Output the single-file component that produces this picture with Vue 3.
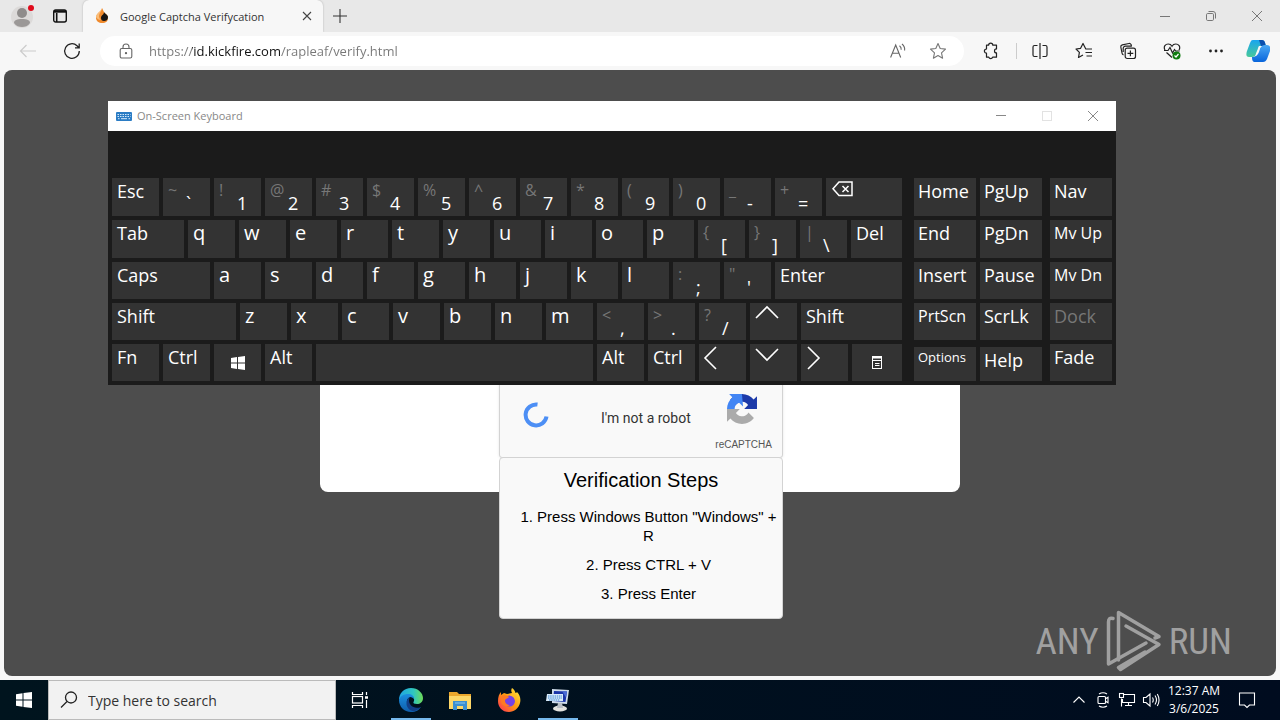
<template>
  <div class="desktop">
    <header class="tab-strip">
      <button class="icon-btn profile" aria-label="Profile">
        <svg width="26" height="26" viewBox="0 0 26 26">
          <circle cx="12" cy="14" r="11" fill="#dcdad9" />
          <circle cx="12" cy="10" r="5" fill="#8f8c8b" />
          <path d="M4 20c0-3 3-4 8-4s8 1 8 4c-2 3-5 4-8 4s-6-1-8-4z" fill="#9b9897" />
          <circle cx="21" cy="5" r="3" fill="#e00b1c" />
        </svg>
      </button>
      <button class="icon-btn tab-actions" aria-label="Tab actions menu">
        <svg width="16" height="16" viewBox="0 0 16 16" fill="none" stroke="#111">
          <rect x="1.7" y="2" width="12.6" height="12" rx="2" stroke-width="1.4" />
          <path d="M2 3.5h12" stroke-width="2.4" />
          <path d="M4.7 5v9" stroke-width="1.6" />
        </svg>
      </button>
      <div class="tab">
        <svg width="14" height="16" viewBox="0 0 14 16">
          <path d="M7 0C7 3 1 5 1 10c0 3 3 5 6 5 4 0 6-2 6-5 0-4-3-4-4-6C8 3 8 1 7 0z" fill="#f08a2c" />
          <path d="M7 0c0 3-3 5-3 8 0 2 1 3 2 4C4 12 2 11 1 9c0-4 5-5 6-9z" fill="#f9bd7a" />
          <path d="M9 4c0 3-3 3-3 6 0 2 1 3 3 3s4-1 4-4c0-2-3-3-4-5z" fill="#151515" />
        </svg>
        <span class="tab-title">Google Captcha Verifycation</span>
        <button class="icon-btn tab-close" aria-label="Close tab">
          <svg width="10" height="10" viewBox="0 0 10 10" stroke="#444" stroke-width="1.1"><path d="M1 1l8 8M9 1l-8 8" /></svg>
        </button>
      </div>
      <button class="icon-btn new-tab" aria-label="New tab">
        <svg width="14" height="14" viewBox="0 0 14 14" stroke="#333" stroke-width="1.1"><path d="M0 7h14M7 0v14" /></svg>
      </button>
      <div class="window-controls">
        <button class="icon-btn" aria-label="Minimize">
          <svg width="12" height="12" viewBox="0 0 12 12" stroke="#777"><path d="M1 6.5h10" /></svg>
        </button>
        <button class="icon-btn" aria-label="Restore">
          <svg width="12" height="12" viewBox="0 0 12 12" stroke="#777" fill="none"><rect x="1.5" y="3.5" width="7" height="7" rx="1.2" /><path d="M3.5 1.5h4.5a2.5 2.5 0 0 1 2.5 2.5v4.5" /></svg>
        </button>
        <button class="icon-btn" aria-label="Close">
          <svg width="12" height="12" viewBox="0 0 12 12" stroke="#777"><path d="M1 1l10 10M11 1L1 11" /></svg>
        </button>
      </div>
    </header>

    <nav class="toolbar">
      <button class="icon-btn back" aria-label="Back">
        <svg width="18" height="14" viewBox="0 0 18 14" stroke="#ccc" stroke-width="1.2" fill="none"><path d="M17 7H1.5M7.5 1l-6 6 6 6" /></svg>
      </button>
      <button class="icon-btn refresh" aria-label="Refresh">
        <svg width="18" height="18" viewBox="0 0 18 18" stroke="#222" stroke-width="1.3" fill="none"><path d="M16.3 9A7.3 7.3 0 1 1 14 3.7l2 2M16.2 1.5v4.3H12" /></svg>
      </button>
      <div class="address-bar">
        <svg width="14" height="16" viewBox="0 0 14 16" stroke="#666" stroke-width="1.1" fill="none">
          <rect x="1.2" y="5.5" width="11.6" height="9.5" rx="1.6" /><path d="M4 5.5V4a3 3 0 0 1 6 0v1.5" /><circle cx="7" cy="10.2" r="0.6" fill="#666" />
        </svg>
        <input v-model="address" class="address-input" type="text" aria-label="Address" spellcheck="false" />
        <button class="icon-btn" aria-label="Read aloud">
          <svg width="16" height="16" viewBox="0 0 16 16" stroke="#666" stroke-width="1.1" fill="none"><path d="M0.6 14.5L5.7 2l5 12.5M2.4 10.3h6.7M9.5 2.8q2 1.5 1.7 4M12 1q3.2 2.6 2.6 6.5" /></svg>
        </button>
        <button class="icon-btn" aria-label="Add to favorites">
          <svg width="18" height="18" viewBox="0 0 18 18" stroke="#777" stroke-width="1.1" fill="none" stroke-linejoin="round"><path d="M9 1.5l2.2 5 5.3.6-4 3.7 1.1 5.4L9 13.5l-4.6 2.7 1.1-5.4-4-3.7 5.3-.6z" /></svg>
        </button>
      </div>
      <div class="tools">
        <button class="icon-btn" aria-label="Extensions">
          <svg width="18" height="18" viewBox="0 0 18 18" class="line"><path d="M5.5 3.2h2.1a2.1 2.1 0 0 1 4.2 0h3.7v3.7a2 2 0 0 0 0 4v4.3h-3.900a2 2 0 0 1-3.800 0H5.500v-4a2.100 2.100 0 0 1 0-4.200z" stroke-linejoin="round" /></svg>
        </button>
        <span class="divider"></span>
        <button class="icon-btn" aria-label="Split screen">
          <svg width="18" height="18" viewBox="0 0 18 18" class="line"><path d="M6.5 3.5h-3A1.5 1.5 0 0 0 2 5v8a1.5 1.5 0 0 0 1.5 1.5h3M11.5 3.5h3A1.5 1.5 0 0 1 16 5v8a1.5 1.5 0 0 1-1.5 1.5h-3M9 1v16" /></svg>
        </button>
        <button class="icon-btn" aria-label="Favorites">
          <svg width="18" height="18" viewBox="0 0 18 18" class="line"><path d="M17 7h-6.2L8 1.5 5.6 6.3 1 7l3.4 3.4L3.5 15.5 8 13M10.5 10.5H17M11.5 14H17" stroke-linejoin="round" /></svg>
        </button>
        <button class="icon-btn" aria-label="Collections">
          <svg width="18" height="18" viewBox="0 0 18 18" class="line"><rect x="6.2" y="6.2" width="10.3" height="10.3" rx="2" /><path d="M11.4 8.5v5.8M8.5 11.4h5.8M4.500 12.8A2 2 0 0 1 3 11L1.800 5A2 2 0 0 1 3.300 2.800L10 1.500a2 2 0 0 1 2.300 1.700l.2 1M4.200 10V6.500A2.200 2.200 0 0 1 6.400 4.200H13" /></svg>
        </button>
        <button class="icon-btn" aria-label="Browser essentials">
          <svg width="18" height="18" viewBox="0 0 18 18" class="line"><path d="M2 8C0 4.500 2.700 2 5.200 2 7 2 8.300 3 9 4.200 9.700 3 11 2 12.800 2c2.500 0 5.200 2.500 3.200 6M3.500 10.500L9 15.500M1 8.500h4l2-3 2.500 5.500 2-3.500 1.200 1.500h4" /><circle cx="13.5" cy="13.5" r="4" fill="#107c10" stroke="none" /><path d="M11.5 13.5l1.5 1.5 2.500-3" stroke="#fff" /></svg>
        </button>
        <button class="icon-btn" aria-label="Settings and more">
          <svg width="18" height="18" viewBox="0 0 18 18" fill="#222"><circle cx="3.5" cy="9" r="1.4" /><circle cx="9" cy="9" r="1.4" /><circle cx="14.5" cy="9" r="1.4" /></svg>
        </button>
        <button class="icon-btn copilot" aria-label="Copilot">
          <svg width="24" height="24" viewBox="0 0 24 24">
            <defs>
              <linearGradient id="cpA" x1="0" y1="0" x2="0" y2="1"><stop offset="0" stop-color="#18a5ef" /><stop offset="1" stop-color="#49c99a" /></linearGradient>
              <linearGradient id="cpB" x1="0" y1="0" x2="0" y2="1"><stop offset="0" stop-color="#4aa8f4" /><stop offset="1" stop-color="#0965db" /></linearGradient>
            </defs>
            <path d="M7 1h9c2 0 3 2 4 6h-4c-2 0-3 1-4 4l-2 5c-1 1-2 2-4 2H3c-3 0-3-3-2-6l3-8c1-2 1-3 3-3z" fill="url(#cpA)" />
            <path d="M13 1h3c3 0 3 3 4 6h-5z" fill="#0b4fae" />
            <path d="M19 6h2c3 0 4 3 3 6l-3 8c-1 2-2 3-4 3H9c-2 0-3-1-3-5h1c2 0 3-1 4-3l3-6c1-2 3-3 5-3z" fill="url(#cpB)" />
            <path d="M13 7h3c-2 1-2 3-3 6-1 2-2 4-4 4 1-2 1-3 2-5s1-4 2-5z" fill="#f7f7f7" />
          </svg>
        </button>
      </div>
    </nav>

    <main class="page">
      <section class="card">
        <div class="captcha">
          <div class="captcha-row">
            <svg class="spinner" width="28" height="28" viewBox="0 0 28 28" fill="none" stroke="#4d8ff5" stroke-width="4"><path d="M15.5 2.500A10.500 10.500 0 1 0 24.500 14.5" /></svg>
            <span class="captcha-label">I'm not a robot</span>
            <div class="captcha-brand">
              <svg width="30" height="30" viewBox="0 0 64 64">
                <path d="M64 31.955a33 33 0 0 0-.037-1.380V4.687l-7.157 7.157C50.949 4.674 42.033.093 32.050.093c-10.389 0-19.622 4.960-25.458 12.640l11.730 11.854a15.550 15.550 0 0 1 4.754-5.334c2.050-1.600 4.952-2.906 8.968-2.906.485 0 .860.057 1.135.163 4.976.393 9.288 3.140 11.828 7.124l-8.307 8.307 27.300.014" fill="#1c3aa9" />
                <path d="M31.862.094a33 33 0 0 0-1.380.037H4.594l7.157 7.157C4.580 13.147 0 22.060 0 32.044c0 0 0 .3.100.5h16.200c.1-4.500 1-7.700 2.860-9.800a15.550 15.550 0 0 1 6.760-4.300l8.307 8.307L31.862.094" fill="#4285f4" />
                <path d="M.001 32.045c.008.467.014.926.037 1.380v25.888l7.157-7.157c5.857 7.170 14.773 11.750 24.756 11.750 10.390 0 19.622-4.960 25.458-12.640l-11.730-11.854a15.550 15.550 0 0 1-4.754 5.334c-2.050 1.600-4.952 2.906-8.968 2.906-.485 0-.860-.057-1.135-.163-4.976-.393-9.288-3.140-11.828-7.124l8.307-8.307L.001 32.045" fill="#ababab" />
              </svg>
              <span>reCAPTCHA</span>
            </div>
          </div>
          <div class="steps">
            <h2>Verification Steps</h2>
            <p v-for="step in steps" :key="step">{{ step }}</p>
          </div>
        </div>
      </section>

      <section class="osk">
        <div class="osk-title">
          <svg width="16" height="9" viewBox="0 0 16 9"><rect width="16" height="9" rx="1" fill="#2b7cc4" /><path d="M1.5 2.5h13M1.5 4.5h13" stroke="#d5e9fa" stroke-dasharray="1.5 1" /><path d="M2 6.700h1.500M5 6.700h6M12.500 6.700H14" stroke="#d5e9fa" /></svg>
          <span>On-Screen Keyboard</span>
          <div class="window-controls">
            <button class="icon-btn" aria-label="Minimize keyboard"><svg width="12" height="12" viewBox="0 0 12 12" stroke="#888"><path d="M1 5.5h10" /></svg></button>
            <button class="icon-btn" aria-label="Maximize keyboard" disabled><svg width="12" height="12" viewBox="0 0 12 12" stroke="#e2e2e2" fill="none"><rect x="1.5" y="1.5" width="9" height="9" /></svg></button>
            <button class="icon-btn" aria-label="Close keyboard"><svg width="12" height="12" viewBox="0 0 12 12" stroke="#888"><path d="M1 1l10 10M11 1L1 11" /></svg></button>
          </div>
        </div>
        <div class="osk-body">
          <div class="key-block main-keys">
            <div v-for="(row, r) in rows" :key="r" class="key-row">
              <button v-for="(key, k) in row" :key="k" class="key" :class="key.kind" :style="{ flexGrow: key.w || 47 }" :aria-label="key.icon || key.label || 'Space'">
                <template v-if="key.icon">
                  <svg v-if="key.icon === 'Backspace'" width="22" height="22" viewBox="0 0 22 22" class="glyph"><path d="M8 4h13v13.500H8L2 10.800zM11.500 8l6 6M17.500 8l-6 6" stroke-width="1.5" /></svg>
                  <svg v-else-if="key.icon === 'Windows'" width="14" height="14" viewBox="0 0 14 14" fill="#fff"><path d="M0 2l6-.900v5.500H0zM7 1l7-1v6.600H7zM0 7.500h6v5.400L0 12zM7 7.500h7V14l-7-1z" /></svg>
                  <svg v-else-if="key.icon === 'Menu'" width="12" height="14" viewBox="0 0 12 14" class="glyph"><rect x="1.5" y="0.5" width="9" height="12" /><path d="M1.5 1.500h9" stroke-width="2" /><path d="M1.5 4.500h9M4 7.500h4.500M4 9.500h4.500" /></svg>
                  <svg v-else width="24" height="24" viewBox="0 0 24 24" class="glyph"><path :d="arrows[key.icon]" stroke-width="1.6" /></svg>
                </template>
                <template v-else>
                  <span v-if="key.shift" class="shifted">{{ key.shift }}</span>
                  <span class="cap">{{ key.label }}</span>
                </template>
              </button>
            </div>
          </div>
          <div class="key-block nav-keys">
            <div v-for="(row, r) in navRows" :key="r" class="key-row">
              <button v-for="key in row" :key="key.label" class="key" :class="key.kind"><span>{{ key.label }}</span></button>
            </div>
          </div>
          <div class="key-block side-keys">
            <div v-for="key in sideKeys" :key="key.label" class="key-row">
              <button class="key" :class="key.kind" :disabled="key.label === 'Dock'"><span>{{ key.label }}</span></button>
            </div>
          </div>
        </div>
      </section>

      <div class="watermark">
        <span>ANY</span>
        <svg width="56" height="62" viewBox="0 0 56 62" fill="none" stroke="#a0a0a0" stroke-width="3.5" stroke-linejoin="round" stroke-linecap="round">
          <path d="M7 8.500Q2.500 7 2.500 12v42L40 33" /><path d="M12.500 50V2.500l40.500 24-4 1.500" /><path d="M20 16l33 18.500L14.500 59.500l-2-2L39 42" />
        </svg>
        <span>RUN</span>
      </div>
    </main>

    <footer class="taskbar">
      <button class="icon-btn start" aria-label="Start">
        <svg width="16" height="16" viewBox="0 0 16 16" fill="#fff"><path d="M0 2.200l6.500-.900v6.200H0zM7.500 1.100L16 0v7.500H7.500zM0 8.500h6.500v6.200L0 13.800zM7.500 8.500H16V16l-8.500-1.100z" /></svg>
      </button>
      <div class="search">
        <svg width="18" height="18" viewBox="0 0 18 18" fill="none" stroke="#222" stroke-width="1.3"><circle cx="11" cy="6.5" r="5.5" /><path d="M7 10.5L1 16.5" /></svg>
        <input v-model="query" type="text" aria-label="Search" placeholder="Type here to search" />
      </div>
      <div class="apps">
        <button class="app" aria-label="Task View">
          <svg width="18" height="18" viewBox="0 0 18 18" fill="none" stroke="#fff" stroke-width="1.2"><path d="M1.5 1v2.500h10V1M1.5 17v-2.500h10V17M15.500 1v3M15.500 9v8" /><rect x="1.5" y="5.5" width="10" height="6.5" /><path d="M14 6.500h3" stroke-width="2.5" /></svg>
        </button>
        <button class="app running" aria-label="Microsoft Edge">
          <svg width="24" height="24" viewBox="0 0 24 24">
            <defs>
              <linearGradient id="edA" x1="0" y1="0" x2="1" y2="0"><stop offset="0" stop-color="#1ea4e4" /><stop offset="0.6" stop-color="#2fc6c0" /><stop offset="1" stop-color="#6fdc56" /></linearGradient>
              <linearGradient id="edB" x1="0" y1="0" x2="0" y2="1"><stop offset="0" stop-color="#1b8fe0" /><stop offset="1" stop-color="#0f5dab" /></linearGradient>
            </defs>
            <path d="M0 12C0 5 5 0 12 0s12 5 12 10c0 4-3 6-6 6-3 0-4-1-3.500-2 1.500-2 .5-6-4-6S1 10 0 12z" fill="url(#edA)" />
            <path d="M0 12c1-4 5-6 9-6 4 0 6 2 6 5-1-1-2-2-4-2-2.500 1-3.500 3-3 6 .5 4 4 6 8 6 2 0 4-.5 6-2-2 3-5 5-10 5C5 24 0 18.500 0 12z" fill="url(#edB)" />
            <path d="M11 9c-6 3-4 14 4 14 3-.5 5-2 7-4-2 1-4 1-6 .5-4-1-6-4-6-7 0-1.500.4-2.500 1-3.500z" fill="#123f87" />
          </svg>
        </button>
        <button class="app" aria-label="File Explorer">
          <svg width="24" height="22" viewBox="0 0 24 22"><path d="M1 3h8l2 2h12v15H1z" fill="#eba72d" /><path d="M1 7h22v13H1z" fill="#fdd768" /><path d="M5 12h14v9h-4v-4H9v4H5z" fill="#3b8ed0" /><path d="M7 14h10" stroke="#8cc7f0" /></svg>
        </button>
        <button class="app" aria-label="Firefox">
          <svg width="24" height="24" viewBox="0 0 24 24">
            <defs><linearGradient id="ff" x1="1" y1="0" x2="0" y2="1"><stop offset="0" stop-color="#fff044" /><stop offset="0.5" stop-color="#ff980e" /><stop offset="1" stop-color="#ff2b5c" /></linearGradient></defs>
            <path d="M15 0c2 1 3 3 3.500 5 1 0 1.500-1 1.500-1 3 3 4 7 3 11-1 5-6 9-11 9C5 24 1 19 1 13c0-4 1-7 3-9v3l3-2c1 0 2 1 3 1l5-1c-1-2-1-3 0-5z" fill="url(#ff)" />
            <circle cx="12.5" cy="13" r="5.5" fill="#7542e5" />
            <path d="M5 8c3-2 6 0 7 1-1 2-4 1-4 4 0 2 2 4 5 4-4 3-9 0-9-4 0-2 .5-4 1-5z" fill="#ff7a22" />
            <path d="M13 8c3 0 5 2 5 5 1-3 0-6-3-7z" fill="#ffbd27" />
          </svg>
        </button>
        <button class="app running" aria-label="On-Screen Keyboard">
          <svg width="24" height="24" viewBox="0 0 24 24"><path d="M6 1l17 1-2 14-15-1z" fill="#cfdcea" /><path d="M8 3l13 .5-1.500 10.500L7 13z" fill="#1b36a9" /><path d="M16 3l5 .5-1 6z" fill="#496bd6" /><ellipse cx="14" cy="20.5" rx="7" ry="3" fill="#e3e3df" /><path d="M12 15h4l1 5h-6z" fill="#b8bec5" /><path d="M1 6h16v7H0z" fill="#d9ebfa" /><path d="M2 8h14M2 10h14M3 12h11" stroke="#3b84cf" stroke-dasharray="1.5 0.7" /></svg>
        </button>
      </div>
      <div class="tray">
        <button class="icon-btn" aria-label="Show hidden icons"><svg width="14" height="14" viewBox="0 0 14 14" class="tray-icon"><path d="M1.5 9.500L7 4l5.500 5.500" /></svg></button>
        <button class="icon-btn" aria-label="Meet now"><svg width="14" height="16" viewBox="0 0 14 16" class="tray-icon"><path d="M3 2q4-2.500 8 0M3 14q4 2.500 8 0M9.500 6.800l2.500-1.600v5.600L9.500 9.200" /><rect x="2" y="4.5" width="7.5" height="7" rx="1" /></svg></button>
        <button class="icon-btn" aria-label="Network"><svg width="18" height="16" viewBox="0 0 18 16" class="tray-icon"><path d="M6 2.500h10.500v8H4.500V7M10.500 10.500v3M7 13.500h7M3.500 6.500v8" /><rect x="1.5" y="1.5" width="4" height="4" /></svg></button>
        <button class="icon-btn" aria-label="Volume"><svg width="18" height="16" viewBox="0 0 18 16" class="tray-icon"><path d="M1.500 5.500h2.500l4-3.500v12L4 10.500H1.500zM10.500 5.500q1.500 2.500 0 5M13 3.500q3 4.500 0 9M15.300 2q3.500 6 0 12" /></svg></button>
      </div>
      <button class="clock"><span>12:37 AM</span><span>3/6/2025</span></button>
      <button class="icon-btn notify" aria-label="Notifications"><svg width="18" height="18" viewBox="0 0 18 18" class="tray-icon"><path d="M1.500 2h15v12h-5L9 16.500 6.500 14h-5z" /></svg></button>
    </footer>
  </div>
</template>

<script setup>
import { ref } from 'vue';

const address = ref('https://id.kickfire.com/rapleaf/verify.html');
const query = ref('');

const steps = [
  '1. Press Windows Button "Windows" + R',
  '2. Press CTRL + V',
  '3. Press Enter'
];

const letters = (text) => text.split('').map(label => ({ label, kind: 'letter' }));
const dual = (shift, label) => ({ shift, label, kind: 'dual' });

// w is the relative key width, 47 when omitted
const rows = [
  [
    { label: 'Esc' },
    dual('~', '`'), dual('!', '1'), dual('@', '2'), dual('#', '3'), dual('$', '4'), dual('%', '5'), dual('^', '6'),
    dual('&', '7'), dual('*', '8'), dual('(', '9'), dual(')', '0'), dual('_', '-'), dual('+', '='),
    { icon: 'Backspace', w: 76 }
  ],
  [
    { label: 'Tab', w: 72 }, ...letters('qwertyuiop'),
    dual('{', '['), dual('}', ']'), dual('|', '\\'), { label: 'Del', w: 51 }
  ],
  [
    { label: 'Caps', w: 98 }, ...letters('asdfghjkl'),
    dual(':', ';'), dual('"', "'"), { label: 'Enter', w: 127 }
  ],
  [
    { label: 'Shift', w: 124 }, ...letters('zxcvbnm'),
    dual('<', ','), dual('>', '.'), dual('?', '/'), { icon: 'Up' }, { label: 'Shift', w: 101 }
  ],
  [
    { label: 'Fn' }, { label: 'Ctrl' }, { icon: 'Windows', kind: 'centered' }, { label: 'Alt' }, { label: '', w: 277 },
    { label: 'Alt' }, { label: 'Ctrl' }, { icon: 'Left' }, { icon: 'Down' }, { icon: 'Right' },
    { icon: 'Menu', kind: 'centered', w: 50 }
  ]
];

const navRows = [
  [{ label: 'Home' }, { label: 'PgUp' }],
  [{ label: 'End' }, { label: 'PgDn' }],
  [{ label: 'Insert' }, { label: 'Pause' }],
  [{ label: 'PrtScn', kind: 'medium' }, { label: 'ScrLk' }],
  [{ label: 'Options', kind: 'short small' }, { label: 'Help', kind: 'short' }]
];

const sideKeys = [
  { label: 'Nav' },
  { label: 'Mv Up', kind: 'medium' },
  { label: 'Mv Dn', kind: 'medium' },
  { label: 'Dock' },
  { label: 'Fade' }
];

const arrows = {
  Up: 'M1 15L12 4l11 11',
  Down: 'M1 5l11 11L23 5',
  Left: 'M12 3L1 14l11 11',
  Right: 'M2 3l11 11L2 25'
};
</script>

<style>
body {
  margin: 0;
}
</style>

<style scoped>
.desktop {
  display: flex;
  flex-direction: column;
  min-height: 100vh;
  background: #f7f7f7;
  font-family: "Open Sans", "Noto Sans", sans-serif;
}
button,
input {
  font-family: inherit;
  border: 0;
  padding: 0;
  margin: 0;
  background: none;
}
svg {
  display: block;
  flex-shrink: 0;
}
.icon-btn {
  display: flex;
  align-items: center;
  justify-content: center;
}
.line {
  fill: none;
  stroke: #222;
  stroke-width: 1.2;
}

/* Tab strip */
.tab-strip {
  display: flex;
  align-items: stretch;
  height: 32px;
  background: #e8e8e8;
}
.profile {
  width: 26px;
  margin-left: 10px;
}
.tab-actions {
  width: 24px;
  margin-left: 12px;
}
.tab {
  display: flex;
  align-items: center;
  width: 240px;
  padding: 0 10px 0 12px;
  margin-left: 11px;
  box-sizing: border-box;
  background: #f7f7f7;
  border-radius: 6px 6px 0 0;
  box-shadow: 0 0 2px #aaa;
  clip-path: inset(0 -3px 0 -3px);
}
.tab-title {
  flex: 1;
  margin-left: 11px;
  font-size: 11px;
  color: #333;
  white-space: nowrap;
}
.tab-close {
  width: 12px;
}
.new-tab {
  width: 34px;
}
.window-controls {
  display: flex;
  margin-left: auto;
}
.window-controls .icon-btn {
  width: 46px;
}

/* Toolbar */
.toolbar {
  display: flex;
  align-items: center;
  height: 38px;
}
.back {
  width: 36px;
  margin-left: 10px;
}
.refresh {
  width: 36px;
  margin-left: 8px;
}
.address-bar {
  display: flex;
  flex: 1;
  align-items: center;
  gap: 16px;
  height: 30px;
  padding: 0 14px 0 19px;
  margin-left: 10px;
  border-radius: 15px;
  background: #fff;
}
.address-bar .icon-btn {
  width: 24px;
}
.address-input {
  flex: 1;
  min-width: 0;
  height: 24px;
  font-size: 13px;
  color: transparent;
  background: linear-gradient(90deg, #777 43px, #111 43px, #111 132px, #777 132px);
  background-clip: text;
  -webkit-background-clip: text;
}
.tools {
  display: flex;
  align-items: center;
  margin-left: 8px;
  padding-right: 2px;
}
.tools .icon-btn {
  width: 44px;
}
.tools .icon-btn:first-child {
  width: 36px;
}
.tools .copilot {
  width: 40px;
}
.divider {
  width: 1px;
  height: 16px;
  margin: 0 1px 0 8px;
  background: #ccc;
}

/* Web page */
.page {
  position: relative;
  display: flex;
  flex: 1;
  flex-direction: column;
  align-items: center;
  margin: 0 4px 4px;
  border-radius: 8px;
  background: #4d4d4d;
}
.card {
  display: flex;
  justify-content: center;
  width: 640px;
  max-width: 100%;
  margin-top: 178px;
  padding: 130px 0 34px;
  border-radius: 8px;
  box-sizing: border-box;
  background: #fff;
}
.captcha {
  position: relative;
  width: 282px;
  margin-left: 2px;
  border: 1px solid #d3d3d3;
  border-radius: 3px;
  background: #f9f9f9;
  box-shadow: 0 0 3px rgba(0, 0, 0, 0.1);
}
.captcha-row {
  display: flex;
  align-items: center;
  height: 78px;
}
.spinner {
  margin-left: 22px;
  margin-bottom: 4px;
}
.captcha-label {
  flex: 1;
  padding-left: 51px;
  font: 14px Roboto, sans-serif;
  color: #333;
}
.captcha-brand {
  display: flex;
  flex-direction: column;
  align-items: center;
  gap: 14px;
  margin-right: 10px;
  margin-top: 10px;
  font: 10px/14px "Liberation Sans", sans-serif;
  color: #555;
}
.captcha-brand svg {
  margin-right: 4px;
}
.steps {
  position: absolute;
  top: 100%;
  left: -1px;
  right: -1px;
  padding: 10px 0 15px;
  border: 1px solid #d3d3d3;
  border-radius: 4px;
  background: #f9f9f9;
  text-align: center;
  font-family: "Liberation Sans", Arial, sans-serif;
  color: #000;
}
.steps h2 {
  margin: 0 0 15px;
  font-size: 20px;
  line-height: 24px;
  font-weight: 500;
}
.steps p {
  margin: 0 0 10px 15px;
  font-size: 15px;
  line-height: 19px;
}
.steps p:last-child {
  margin-bottom: 0;
}

/* On-screen keyboard */
.osk {
  position: absolute;
  top: 31px;
  left: 104px;
  right: 160px;
  background: #1b1b1b;
}
.osk-title {
  display: flex;
  align-items: stretch;
  height: 30px;
  padding-left: 8px;
  background: #fff;
  font-size: 11px;
  line-height: 30px;
  color: #888;
}
.osk-title > svg {
  align-self: center;
  margin-right: 5px;
}
.osk-body {
  display: flex;
  padding: 47px 4px 4px;
}
.key-block {
  display: grid;
  grid-template-rows: 38px 38px 37px 37px 37px;
  gap: 4px;
}
.main-keys {
  flex: 790;
}
.nav-keys {
  flex: 128;
  margin-left: 12px;
}
.side-keys {
  flex: 62;
  margin-left: 8px;
}
.key-row {
  display: flex;
  gap: 4px;
}
.key {
  display: flex;
  flex: 1 1 0;
  align-items: flex-start;
  min-width: 0;
  background: #333;
  color: #fff;
  font-size: 18px;
  line-height: 26px;
  text-align: left;
  white-space: nowrap;
}
.key > :first-child {
  margin-left: 4px;
}
.main-keys .key > :first-child {
  margin-left: 5px;
}
.key.letter {
  font-size: 20px;
}
.key.medium {
  font-size: 16px;
}
.key.small {
  font-size: 13px;
  line-height: 20px;
}
.key.short {
  margin-top: 3px;
}
.key.centered {
  align-items: center;
  justify-content: center;
}
.main-keys .key.centered > :first-child {
  margin-left: 0;
}
.key:disabled {
  color: #777;
}
.key svg {
  overflow: visible;
}
.glyph {
  fill: none;
  stroke: #fff;
}
.shifted {
  width: 18px;
  color: #777;
  font-size: 16px;
  line-height: 24px;
}
.dual .cap {
  padding-top: 12px;
}

.watermark {
  position: absolute;
  right: 44px;
  bottom: 4px;
  display: flex;
  align-items: center;
  gap: 7px;
  font-family: "Roboto Condensed", "Open Sans Condensed", "Noto Sans Condensed", Roboto, sans-serif;
  font-size: 37px;
  color: #a0a0a0;
}

/* Taskbar */
.taskbar {
  display: flex;
  height: 40px;
  background: linear-gradient(90deg, #00141e, #000c1f);
  color: #fff;
}
.start {
  width: 48px;
}
.search {
  display: flex;
  align-items: center;
  width: 288px;
  padding-left: 11px;
  border: 1px solid #bbb;
  box-sizing: border-box;
  background: #f2f2f2;
}
.search input {
  flex: 1;
  height: 24px;
  margin-left: 10px;
  font-size: 14px;
}
.search input::placeholder {
  color: #333;
  opacity: 1;
}
.apps {
  display: flex;
  gap: 1px;
}
.app {
  display: flex;
  align-items: center;
  justify-content: center;
  width: 48px;
}
.app:first-child {
  margin-right: 2px;
}
.running {
  background: linear-gradient(#76b9ed, #76b9ed) center bottom / 40px 2px no-repeat;
}
.tray {
  display: flex;
  margin-left: auto;
}
.tray .icon-btn {
  width: 24px;
}
.tray-icon {
  fill: none;
  stroke: #fff;
  stroke-width: 1.1;
}
.clock {
  display: flex;
  flex-direction: column;
  align-items: center;
  justify-content: center;
  width: 62px;
  font-size: 12px;
  line-height: 18px;
  color: #fff;
  white-space: nowrap;
}
.notify {
  width: 44px;
  margin-right: 11px;
}
</style>
